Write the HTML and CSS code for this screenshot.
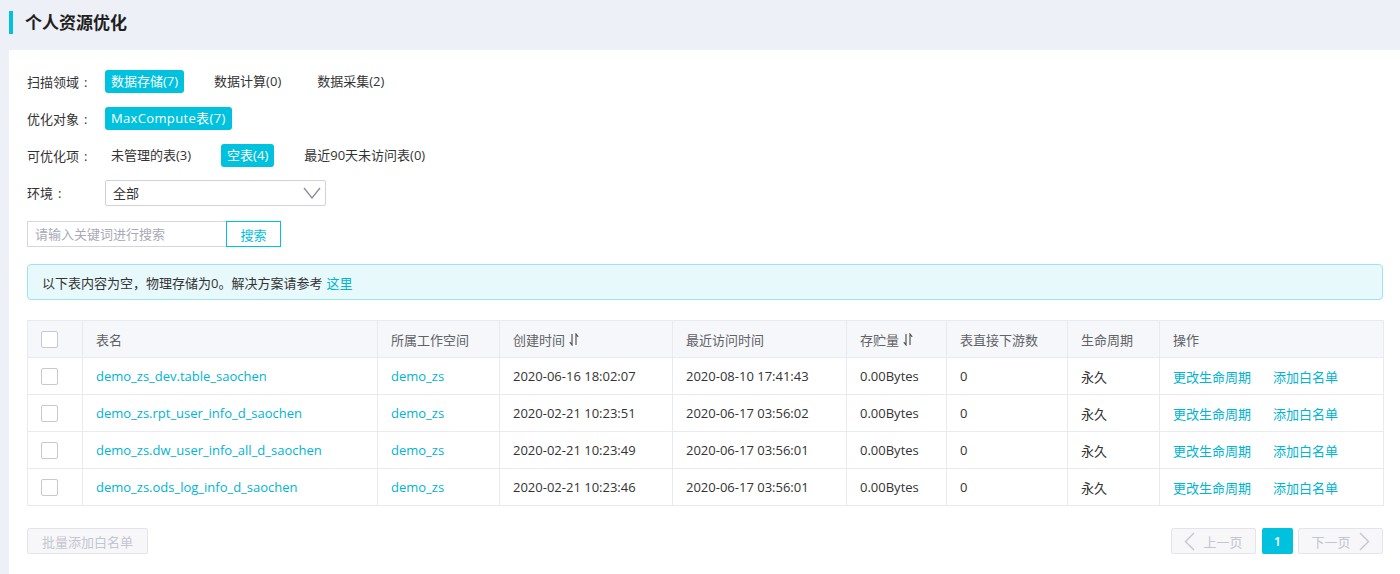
FILE: index.html
```html
<!DOCTYPE html>
<html lang="zh-CN">
<head>
<meta charset="utf-8">
<title>个人资源优化</title>
<link rel="stylesheet" href="styles.css">
</head>
<body>
<div class="header">
  <span class="header-bar"></span>
  <h1 class="title">个人资源优化</h1>
</div>
<div class="panel">
  <div class="filter-row">
    <span class="filter-label">扫描领域<span class="colon">:</span></span>
    <span class="opt active">数据存储(7)</span>
    <span class="opt">数据计算(0)</span>
    <span class="opt">数据采集(2)</span>
  </div>
  <div class="filter-row">
    <span class="filter-label">优化对象<span class="colon">:</span></span>
    <span class="opt active wide">MaxCompute表(7)</span>
  </div>
  <div class="filter-row">
    <span class="filter-label">可优化项<span class="colon">:</span></span>
    <span class="opt">未管理的表(3)</span>
    <span class="opt active">空表(4)</span>
    <span class="opt">最近90天未访问表(0)</span>
  </div>
  <div class="filter-row">
    <span class="filter-label">环境<span class="colon">:</span></span>
    <div class="select">
      <span>全部</span>
      <svg class="select-arrow" width="18" height="12" viewBox="0 0 18 12"><path d="M1 1 L9 11 L17 1" fill="none" stroke="#8a8c99" stroke-width="1.3"/></svg>
    </div>
  </div>
  <div class="search">
    <input class="search-input" type="text" placeholder="请输入关键词进行搜索">
    <button class="search-btn">搜索</button>
  </div>
  <div class="notice">以下表内容为空，物理存储为0。解决方案请参考 <a class="link">这里</a></div>
  <table class="grid">
    <colgroup>
      <col style="width:55px"><col style="width:295px"><col style="width:122px"><col style="width:173px"><col style="width:174px"><col style="width:100px"><col style="width:121px"><col style="width:92px"><col style="width:224px">
    </colgroup>
    <thead>
      <tr>
        <th><span class="checkbox"></span></th>
        <th>表名</th>
        <th>所属工作空间</th>
        <th>创建时间 <svg class="sort" width="10" height="13" viewBox="0 0 10 13"><path d="M3 1 V12 L0.8 9.2 M7 12 V1 L9.2 3.8" fill="none" stroke="#555" stroke-width="1.2"/></svg></th>
        <th>最近访问时间</th>
        <th>存贮量 <svg class="sort" width="10" height="13" viewBox="0 0 10 13"><path d="M3 1 V12 L0.8 9.2 M7 12 V1 L9.2 3.8" fill="none" stroke="#555" stroke-width="1.2"/></svg></th>
        <th>表直接下游数</th>
        <th>生命周期</th>
        <th>操作</th>
      </tr>
    </thead>
    <tbody>
      <tr>
        <td><span class="checkbox"></span></td>
        <td><a class="link">demo_zs_dev.table_saochen</a></td>
        <td><a class="link">demo_zs</a></td>
        <td>2020-06-16 18:02:07</td>
        <td>2020-08-10 17:41:43</td>
        <td>0.00Bytes</td>
        <td>0</td>
        <td>永久</td>
        <td><a class="link act">更改生命周期</a><a class="link">添加白名单</a></td>
      </tr>
      <tr>
        <td><span class="checkbox"></span></td>
        <td><a class="link">demo_zs.rpt_user_info_d_saochen</a></td>
        <td><a class="link">demo_zs</a></td>
        <td>2020-02-21 10:23:51</td>
        <td>2020-06-17 03:56:02</td>
        <td>0.00Bytes</td>
        <td>0</td>
        <td>永久</td>
        <td><a class="link act">更改生命周期</a><a class="link">添加白名单</a></td>
      </tr>
      <tr>
        <td><span class="checkbox"></span></td>
        <td><a class="link">demo_zs.dw_user_info_all_d_saochen</a></td>
        <td><a class="link">demo_zs</a></td>
        <td>2020-02-21 10:23:49</td>
        <td>2020-06-17 03:56:01</td>
        <td>0.00Bytes</td>
        <td>0</td>
        <td>永久</td>
        <td><a class="link act">更改生命周期</a><a class="link">添加白名单</a></td>
      </tr>
      <tr>
        <td><span class="checkbox"></span></td>
        <td><a class="link">demo_zs.ods_log_info_d_saochen</a></td>
        <td><a class="link">demo_zs</a></td>
        <td>2020-02-21 10:23:46</td>
        <td>2020-06-17 03:56:01</td>
        <td>0.00Bytes</td>
        <td>0</td>
        <td>永久</td>
        <td><a class="link act">更改生命周期</a><a class="link">添加白名单</a></td>
      </tr>
    </tbody>
  </table>
  <div class="footer">
    <button class="btn-disabled batch">批量添加白名单</button>
    <div class="pager">
      <button class="btn-disabled page-nav"><svg width="11" height="19" viewBox="0 0 11 19"><path d="M10 1 L1.5 9.5 L10 18" fill="none" stroke="#c3c5cf" stroke-width="1.4"/></svg><span>上一页</span></button>
      <button class="page-num">1</button>
      <button class="btn-disabled page-nav"><span>下一页</span><svg width="11" height="19" viewBox="0 0 11 19"><path d="M1 1 L9.5 9.5 L1 18" fill="none" stroke="#c3c5cf" stroke-width="1.4"/></svg></button>
    </div>
  </div>
</div>
</body>
</html>
```

FILE: styles.css
```css
* { box-sizing: border-box; }
html, body { height: 100%; }
body {
  margin: 0;
  background: #eef0f7;
  font-family: "Open Sans", "Noto Sans CJK SC", sans-serif;
  font-size: 13px;
  color: #333;
}
.header {
  height: 43px;
  display: flex;
  align-items: center;
  padding-left: 9px;
}
.header-bar {
  width: 4px;
  height: 23px;
  background: #00c1de;
  margin-right: 12px;
  margin-top: 1px;
}
.title {
  margin: 0;
  font-family: "Noto Sans CJK SC", sans-serif;
  font-size: 17px;
  font-weight: 700;
  color: #1f1f1f;
}
.panel {
  margin: 7px 0 0 9px;
  background: #fff;
  padding: 13px 17px 0 18px;
  min-height: calc(100% - 50px);
}
.filter-row {
  height: 37px;
  display: flex;
  align-items: center;
}
.filter-label {
  width: 78px;
  flex: none;
  color: #333;
}
.colon { margin-left: 5px; }
.opt {
  height: 23px;
  line-height: 23px;
  padding: 0 6px;
  margin-right: 24px;
  border-radius: 3px;
  color: #333;
}
.opt.active {
  background: #00c1de;
  color: #fff;
}
.opt.wide { letter-spacing: 0.35px; }
.select {
  width: 221px;
  height: 26px;
  border: 1px solid #cfd1dd;
  border-radius: 2px;
  display: flex;
  align-items: center;
  justify-content: space-between;
  padding: 0 4px 0 7px;
  color: #333;
}
.select-arrow { display: block; }
.search {
  display: flex;
  margin-top: 10px;
  height: 26px;
}
.search-input {
  width: 199px;
  height: 26px;
  border: 1px solid #d3d5e0;
  border-right: none;
  padding: 0 7px;
  font: inherit;
  font-size: 13px;
  color: #333;
  outline: none;
}
.search-input::placeholder { color: #a8aab5; }
.search-btn {
  width: 55px;
  height: 26px;
  border: 1px solid #00c1de;
  background: #fff;
  color: #00c1de;
  font: inherit;
  font-size: 13px;
  padding: 0;
}
.notice {
  margin-top: 17px;
  height: 36px;
  border: 1px solid #9ee4ef;
  background: #e8f9fc;
  border-radius: 4px;
  display: flex;
  align-items: center;
  padding-left: 14px;
  color: #333;
}
.notice .link { margin-left: 4px; }
.link { color: #00b4d2; text-decoration: none; }
.grid {
  margin-top: 20px;
  width: 100%;
  border-collapse: collapse;
  table-layout: fixed;
  border: 1px solid #e9eaf0;
}
.grid th, .grid td {
  height: 37px;
  padding: 0 0 0 13px;
  text-align: left;
  border: 1px solid #e9eaf0;
  white-space: nowrap;
  vertical-align: middle;
}
.grid th {
  background: #f6f7fa;
  font-weight: 400;
  color: #606266;
}
.grid td { color: #333; }
.checkbox {
  display: block;
  width: 17px;
  height: 17px;
  border: 1px solid #c6c8d6;
  border-radius: 2px;
  background: #fff;
}
.sort { vertical-align: -1px; margin-left: 1px; }
.act { margin-right: 22px; }
.footer {
  margin-top: 22px;
  display: flex;
  justify-content: space-between;
  align-items: center;
}
.btn-disabled {
  height: 26px;
  border: 1px solid #e4e5eb;
  background: #f7f7fa;
  color: #c3c5cf;
  font: inherit;
  font-size: 13px;
  border-radius: 2px;
}
.batch { width: 121px; padding: 0; }
.pager { display: flex; align-items: center; }
.page-nav {
  width: 85px;
  display: flex;
  align-items: center;
  justify-content: center;
  gap: 8px;
  padding: 0;
}
.page-nav svg { display: block; }
.page-num {
  width: 31px;
  height: 26px;
  margin: 0 5px 0 6px;
  border: none;
  border-radius: 2px;
  background: #00c1de;
  color: #fff;
  font: inherit;
  font-size: 13px;
  font-weight: 600;
  padding: 0;
}
```
